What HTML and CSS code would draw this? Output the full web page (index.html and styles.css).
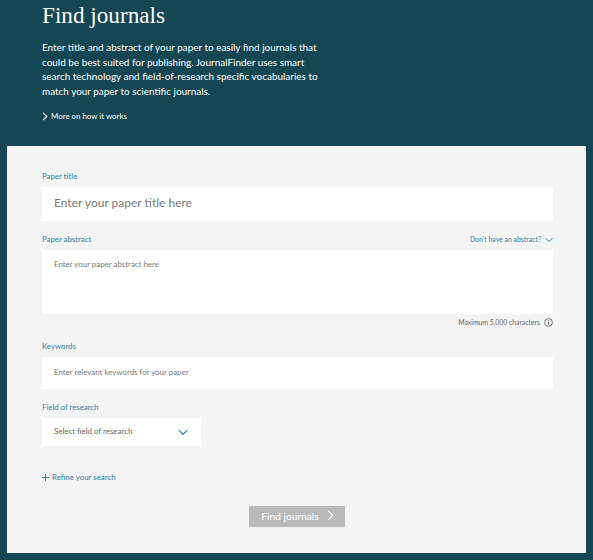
FILE: index.html
```html
<!DOCTYPE html>
<html lang="en">
<head>
    <meta charset="UTF-8">
    <meta name="viewport" content="width=device-width, initial-scale=1.0">
    <title>Find journals</title>
    <link rel="stylesheet" href="styles.css">
</head>
<body>
    <!-- Intro -->
    <header class="intro">
        <h1>Find journals</h1>
        <p>Enter title and abstract of your paper to easily find journals that could be best suited for publishing. JournalFinder uses smart search technology and field-of-research specific vocabularies to match your paper to scientific journals.</p>
        <a class="more" href="#">
            <svg width="6" height="9" viewBox="0 0 6 9"><path d="M1 .8 4.8 4.5 1 8.2" fill="none" stroke="#fff" stroke-width="1.1"/></svg>
            More on how it works
        </a>
    </header>

    <!-- Search form -->
    <main class="panel">
        <div class="label">Paper title</div>
        <div class="field field-title">Enter your paper title here</div>

        <div class="label-row">
            <div class="label">Paper abstract</div>
            <a class="no-abstract" href="#">Don't have an abstract?
                <svg width="8" height="6" viewBox="0 0 8 6"><path d="M.6 1 4 4.6 7.4 1" fill="none" stroke="#2b7f9e" stroke-width="1"/></svg>
            </a>
        </div>
        <div class="field field-abstract">Enter your paper abstract here</div>
        <div class="limit">Maximum 5,000 characters
            <svg width="9" height="9" viewBox="0 0 9 9"><circle cx="4.5" cy="4.5" r="3.9" fill="none" stroke="#555" stroke-width=".8"/><path d="M4.5 3.8v3M4.5 2v1" stroke="#555" stroke-width=".9"/></svg>
        </div>

        <div class="label label-keywords">Keywords</div>
        <div class="field field-keywords">Enter relevant keywords for your paper</div>

        <div class="label label-research">Field of research</div>
        <div class="field field-select">
            <span class="select-text">Select field of research</span>
            <svg width="10" height="7" viewBox="0 0 10 7"><path d="M.8 1.2 5 5.4 9.2 1.2" fill="none" stroke="#2b7f9e" stroke-width="1.2"/></svg>
        </div>

        <a class="refine" href="#">
            <svg width="7" height="7" viewBox="0 0 7 7"><path d="M3.5 0v7M0 3.5h7" stroke="#2b7f9e" stroke-width="1"/></svg>
            Refine your search
        </a>

        <div class="actions">
            <button class="submit" type="button">Find journals
                <svg width="7" height="11" viewBox="0 0 7 11"><path d="M1 .8 5.8 5.5 1 10.2" fill="none" stroke="#fff" stroke-width="1.1"/></svg>
            </button>
        </div>
    </main>
</body>
</html>
```

FILE: styles.css
```css
html, body { margin: 0; }
body { height: 560px; overflow: hidden; background: #144654; font-family: "Lato", "Liberation Sans", sans-serif; }
a { text-decoration: none; }

.intro { height: 146px; box-sizing: border-box; padding: 1px 0 0 42px; color: #fff; }
.intro h1 { margin: 0; font-family: "Liberation Serif", serif; font-weight: 400; font-size: 23.2px; line-height: 29px; }
.intro p { width: 280px; margin: 10px 0 0; font-size: 9.95px; line-height: 14.5px; }
.more { display: flex; align-items: center; gap: 3px; margin-top: 12px; color: #fff; font-size: 7.9px; line-height: 12px; }

.panel { height: 407px; box-sizing: border-box; margin: 0 7px; padding: 24px 33px 0 35px; background: #f4f4f4; }
.label { color: #2b7f9e; font-size: 7.8px; line-height: 13px; }
.label-row { display: flex; justify-content: space-between; margin-top: 12px; }
.no-abstract { display: flex; align-items: center; gap: 4px; color: #2b7f9e; font-size: 6.9px; line-height: 13px; }
.label-keywords { margin-top: 13px; }
.label-research { margin-top: 12px; }

.field { box-sizing: border-box; margin-top: 4px; padding-left: 12px; background: #fff; color: #7a7a7a; font-size: 7.9px; }
.field-title { display: flex; align-items: center; height: 34px; padding-bottom: 3px; font-size: 12px; }
.field-abstract { height: 64px; padding-top: 8px; line-height: 12px; }
.field-keywords { display: flex; align-items: center; height: 32px; padding-bottom: 2px; }
.field-select { display: flex; align-items: center; justify-content: space-between; width: 159px; height: 28px; padding-right: 13px; color: #666; }
.select-text { padding-bottom: 2px; }

.limit { display: flex; align-items: center; justify-content: flex-end; gap: 4px; margin-top: 3px; color: #666; font-size: 6.85px; line-height: 10px; }
.refine { display: flex; align-items: center; gap: 3px; margin-top: 25px; color: #2b7f9e; font-size: 7.9px; line-height: 12px; }

.actions { display: flex; justify-content: center; margin-top: 23px; padding-right: 2px; }
.submit { display: flex; align-items: center; justify-content: center; gap: 8px; width: 96px; height: 21px; padding: 0 0 2px 2px; border: 0; background: #b9b9b9; color: #fff; font-family: inherit; font-size: 10.2px; }
```
